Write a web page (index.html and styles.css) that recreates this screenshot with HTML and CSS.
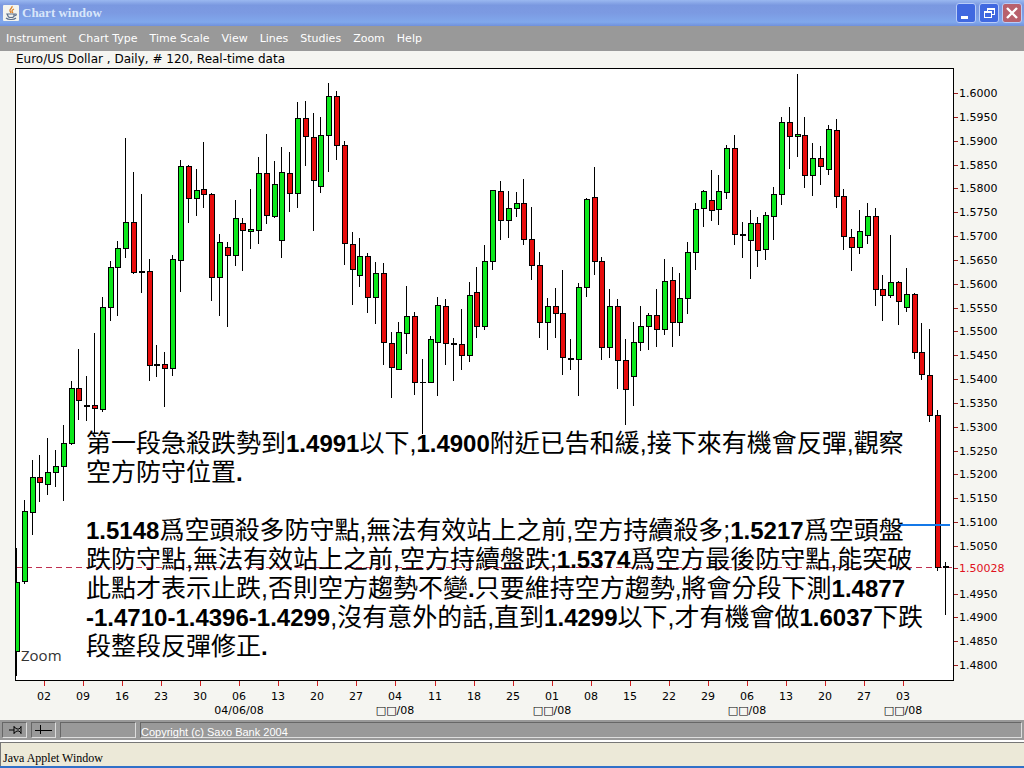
FILE: index.html
```
<!DOCTYPE html>
<html lang="zh-Hant">
<head>
    <meta charset="UTF-8">
    <meta name="viewport" content="width=device-width, initial-scale=1.0">
    <title>Chart window</title>
    <link rel="stylesheet" href="styles.css">
</head>
<body>
    <header class="titlebar">
        <svg class="java-icon" width="16" height="16" viewBox="0 0 16 16">
            <rect width="16" height="16" rx="1" fill="#f4f4ee"/>
            <path d="M9 1c1 2-3 3-2 5l1 2M11 4c-2 1-3 2-1 4" fill="none" stroke="#d9822b" stroke-width="1.3"/>
            <path d="M4 9h7v2c0 2-6 2-6 0zM11 9h2c1 1-1 2-2 2M3 13c2 2 8 2 10 0" fill="none" stroke="#5b6f8c" stroke-width="1.2"/>
        </svg>
        <h1>Chart window</h1>
        <div class="window-buttons">
            <button type="button" aria-label="Minimize">
                <svg width="18" height="18"><rect x="4" y="12" width="7" height="3" fill="#fff"/></svg>
            </button>
            <button type="button" aria-label="Restore">
                <svg width="18" height="18" fill="#fff" shape-rendering="crispEdges">
                    <path d="M7 4h8v2H7zM7 6h1v1H7zM14 6h1v5h-1zM12 10h2v1h-2z"/>
                    <path d="M4 7h8v2H4zM4 9h1v5H4zM11 9h1v5h-1zM4 13h8v1H4z"/>
                </svg>
            </button>
            <button type="button" class="close" aria-label="Close">
                <svg width="18" height="18"><path d="M4 4l10 10M14 4L4 14" stroke="#fff" stroke-width="2.4"/></svg>
            </button>
        </div>
    </header>

    <nav class="menu">
        <button type="button">Instrument</button>
        <button type="button">Chart Type</button>
        <button type="button">Time Scale</button>
        <button type="button">View</button>
        <button type="button">Lines</button>
        <button type="button">Studies</button>
        <button type="button">Zoom</button>
        <button type="button">Help</button>
    </nav>

    <main class="chart">
        <svg id="chart" viewBox="0 51 1024 669">
            <text class="chart-title" x="16" y="63">Euro/US Dollar , Daily, # 120, Real-time data</text>
            <rect x="15" y="68" width="939" height="613" fill="#000"/>
            <rect x="16" y="69" width="937" height="611" fill="#fff"/>
            <g id="last-price"></g>
            <g id="candles"></g>
            <g id="axis"></g>
            <rect x="898" y="524" width="52" height="2" fill="#1478e8"/>
            <text class="zoom-label" x="21" y="661">Zoom</text>
        </svg>
        <div class="note">
            <p>第一段急殺跌勢到<b>1.4991</b>以下,<b>1.4900</b>附近已告和緩,接下來有機會反彈,觀察<br>空方防守位置<b>.</b></p>
            <p><b>1.5148</b>爲空頭殺多防守點,無法有效站上之前,空方持續殺多;<b>1.5217</b>爲空頭盤<br>跌防守點,無法有效站上之前,空方持續盤跌;<b>1.5374</b>爲空方最後防守點,能突破<br>此點才表示止跌,否則空方趨勢不變<b>.</b>只要維持空方趨勢,將會分段下測<b>1.4877</b><br><b>-1.4710-1.4396-1.4299</b>,沒有意外的話,直到<b>1.4299</b>以下,才有機會做<b>1.6037</b>下跌<br>段整段反彈修正<b>.</b></p>
        </div>
    </main>

    <div class="toolbar">
        <button type="button" aria-label="Pin">
            <svg width="22" height="14" fill="none" stroke="#000"><path d="M6 7h5M11 3v8M11 4l3 2h2l2-2M11 10l3-2h2l2 2M18 3v8"/></svg>
        </button>
        <button type="button" aria-label="Crosshair">
            <svg width="22" height="14" fill="none" stroke="#000" shape-rendering="crispEdges"><path d="M3 7h17M8 2v9"/></svg>
        </button>
        <div class="field"></div>
        <div class="field copyright">Copyright (c) Saxo Bank 2004</div>
    </div>

    <footer class="applet">Java Applet Window</footer>

    <script src="chart.js"></script>
</body>
</html>
```
FILE: styles.css
```
body {
    margin: 0;
    background-color: #f5f5f1;
    font-family: "DejaVu Sans", sans-serif;
    font-size: 11px;
}

button {
    border: none;
    padding: 0;
    font: inherit;
}

svg {
    display: block;
}

.titlebar {
    display: flex;
    align-items: center;
    height: 26px;
    padding: 0 2px 0 3px;
    gap: 3px;
    box-sizing: border-box;
    background: linear-gradient(#9ab8f0, #7a98e0 20%, #7c9ae2 50%, #80a8ec 85%, #7090dc);
}

.titlebar h1 {
    flex: 1;
    margin: 0;
    font: bold 13px "Liberation Serif", serif;
    color: #d8e6fa;
}

.window-buttons {
    display: flex;
    gap: 3px;
}

.window-buttons button {
    width: 20px;
    height: 20px;
    border: 1px solid #b8ccf8;
    border-radius: 3px;
    background-color: #4068e0;
}

.window-buttons .close {
    background-color: #b8606c;
}

.menu {
    display: flex;
    align-items: center;
    gap: 12px;
    height: 25px;
    padding: 0 6px;
    background-color: #999;
}

.menu button {
    background: none;
    color: #fff;
}

.chart {
    position: relative;
}

#chart {
    width: 100%;
    height: auto;
    shape-rendering: crispEdges;
}

.chart-title {
    font-size: 12px;
}

.axis-date {
    text-anchor: middle;
}

.zoom-label {
    font: 15px "Open Sans", sans-serif;
    fill: #333;
}

/* commentary lies over the candles */
.note {
    position: absolute;
    left: 86px;
    top: 378px;
    font: 25px/29px "Liberation Sans", "Noto Sans CJK TC", sans-serif;
    white-space: nowrap;
    color: #000;
}

.note p {
    margin: 0 0 29px;
}

.note b {
    font-size: 24px;
}

.toolbar {
    display: flex;
    gap: 4px;
    height: 20px;
    padding: 2px;
    box-sizing: border-box;
    background-color: #999;
}

.toolbar button {
    width: 25px;
    height: 16px;
    border: 1px solid;
    border-color: #666 #ddd #ddd #666;
    background-color: #999;
}

.field {
    width: 74px;
    border: 1px solid;
    border-color: #666 #ddd #ddd #666;
}

.copyright {
    flex: 1;
    color: #fff;
    font: 11px/18px "Liberation Sans", sans-serif;
}

.applet {
    height: 28px;
    box-sizing: border-box;
    padding-left: 3px;
    border-top: 2px solid #fff;
    border-bottom: 2px solid #3070c8;
    box-shadow: inset 1px 1px #777;
    background-color: #ece9d8;
    font: 12px/32px "Liberation Serif", serif;
}
```
FILE: chart.js
```
// high, body top, body bottom, low, direction
const candles = [
    [548, 582, 652, 676, "up"], [500, 511, 582, 584, "up"], [460, 477, 513, 535, "up"], [455, 477, 483, 502, "down"],
    [438, 472, 485, 495, "up"], [450, 466, 473, 487, "up"], [425, 443, 467, 501, "up"], [381, 388, 444, 445, "up"],
    [349, 388, 401, 420, "down"], [376, 405, 407, 421, "down"], [333, 405, 409, 434, "down"], [297, 307, 410, 412, "up"],
    [261, 267, 308, 321, "up"], [241, 248, 268, 316, "up"], [138, 222, 249, 258, "up"], [172, 222, 273, 274, "down"],
    [194, 271, 273, 293, "down"], [259, 271, 366, 381, "down"], [345, 364, 366, 377, "down"], [352, 364, 369, 407, "down"],
    [255, 259, 369, 376, "up"], [160, 166, 261, 292, "up"], [165, 166, 199, 223, "down"], [169, 190, 199, 216, "up"],
    [142, 189, 195, 208, "down"], [193, 194, 278, 301, "down"], [234, 242, 278, 316, "up"], [242, 247, 256, 327, "down"],
    [200, 218, 256, 266, "up"], [218, 223, 231, 271, "down"], [189, 229, 232, 249, "up"], [157, 173, 231, 244, "up"],
    [134, 173, 216, 224, "down"], [161, 184, 217, 218, "up"], [147, 172, 241, 258, "up"], [152, 173, 194, 212, "down"],
    [102, 118, 194, 208, "up"], [101, 118, 137, 166, "down"], [113, 137, 181, 231, "down"], [117, 135, 187, 193, "up"],
    [83, 96, 136, 172, "up"], [91, 96, 146, 160, "down"], [141, 145, 244, 265, "down"], [232, 244, 270, 305, "down"],
    [238, 256, 276, 287, "up"], [253, 256, 298, 313, "down"], [262, 273, 298, 324, "up"], [263, 273, 343, 365, "down"],
    [332, 343, 368, 398, "down"], [322, 332, 370, 370, "up"], [286, 316, 334, 354, "up"], [312, 316, 383, 395, "down"],
    [359, 382, 383, 434, "down"], [336, 339, 383, 383, "up"], [297, 305, 343, 396, "up"], [299, 306, 344, 365, "down"],
    [338, 343, 345, 381, "down"], [309, 344, 356, 370, "down"], [282, 295, 356, 362, "up"], [267, 292, 327, 338, "down"],
    [245, 261, 327, 330, "up"], [190, 190, 262, 270, "up"], [181, 191, 221, 240, "down"], [191, 208, 221, 238, "up"],
    [192, 203, 209, 217, "up"], [179, 203, 240, 245, "down"], [207, 239, 266, 280, "down"], [252, 265, 323, 338, "down"],
    [298, 306, 323, 350, "up"], [288, 306, 314, 338, "down"], [270, 313, 358, 375, "down"], [339, 358, 360, 370, "down"],
    [283, 287, 360, 396, "up"], [198, 199, 288, 297, "up"], [167, 197, 262, 275, "down"], [257, 261, 348, 360, "down"],
    [289, 306, 348, 358, "up"], [299, 306, 361, 389, "down"], [339, 360, 390, 425, "down"], [322, 342, 377, 406, "up"],
    [306, 326, 343, 351, "up"], [313, 315, 327, 350, "up"], [289, 315, 330, 347, "down"], [259, 281, 330, 335, "up"],
    [267, 280, 323, 347, "down"], [273, 298, 323, 336, "up"], [242, 252, 299, 314, "up"], [203, 209, 253, 270, "up"],
    [190, 191, 209, 227, "up"], [170, 200, 211, 221, "down"], [175, 191, 210, 225, "up"], [145, 148, 193, 199, "up"],
    [135, 148, 235, 245, "down"], [222, 234, 236, 258, "down"], [210, 223, 241, 279, "up"], [217, 223, 251, 267, "down"],
    [212, 215, 250, 260, "up"], [187, 194, 217, 240, "up"], [117, 122, 195, 205, "up"], [107, 122, 137, 169, "down"],
    [74, 134, 137, 157, "up"], [117, 135, 176, 188, "down"], [143, 158, 176, 196, "up"], [146, 158, 167, 185, "down"],
    [125, 129, 170, 175, "up"], [119, 130, 197, 208, "down"], [189, 196, 237, 250, "down"], [229, 237, 248, 271, "down"],
    [210, 231, 248, 254, "up"], [203, 216, 236, 244, "up"], [208, 216, 290, 306, "down"], [275, 289, 296, 321, "down"],
    [235, 282, 296, 298, "up"], [281, 282, 302, 325, "down"], [268, 294, 308, 312, "up"], [293, 294, 353, 359, "down"],
    [323, 352, 375, 380, "down"], [329, 375, 416, 422, "down"], [410, 415, 568, 571, "down"], [562, 566, 568, 615, "down"]
];
const days = ["02", "09", "16", "23", "30", "06", "13", "20", "27", "04", "11", "18", "25",
    "01", "08", "15", "22", "29", "06", "13", "20", "27", "03"];
const months = { 5: "04/06/08", 9: "□□/08", 13: "□□/08", 18: "□□/08", 22: "□□/08" };
const colors = { up: "#0ce81c", down: "#e80c0c" };

function rect(x, y, w, h, fill) {
    return `<rect x="${x}" y="${y}" width="${w}" height="${h}" fill="${fill}"/>`;
}

function drawCandles() {
    let out = "";
    candles.forEach(([high, top, bottom, low, dir], i) => {
        const x = Math.floor(16.5 + 7.805 * i);
        const left = Math.max(x - 2, 15);
        const right = x + 4;
        out += rect(x, high, 1, low - high, "#000");
        out += rect(left, top, right - left, bottom - top, "#000");
        if (bottom - top > 2) {
            out += rect(left + 1, top + 1, right - left - 2, bottom - top - 2, colors[dir]);
        }
    });
    document.getElementById("candles").innerHTML = out;
}

function drawLastPrice() {
    let out = "";
    for (let x = 16; x < 950; x += 10) {
        out += rect(x, 567, 6, 1, "#c03050");
    }
    document.getElementById("last-price").innerHTML = out;
}

function drawAxis() {
    let out = "";
    for (let i = 0; i <= 24; i++) {
        const y = Math.round(93 + i * 143 / 6);
        if (i === 20) {
            // last price takes the place of 1.5000
            out += rect(954, 568, 4, 1, "#c02030") + `<text x="959" y="572" fill="#e01020">1.50028</text>`;
            continue;
        }
        out += rect(954, y, 4, 1, "#a02020") + `<text x="959" y="${y + 4}">${(1.6 - i * 0.005).toFixed(4)}</text>`;
    }
    days.forEach((day, i) => {
        const x = Math.round(44 + i * 39.05);
        out += rect(x, 681, 1, 5, "#d02020") + `<text class="axis-date" x="${x}" y="700">${day}</text>`;
        if (months[i]) {
            out += `<text class="axis-date" x="${x}" y="714">${months[i]}</text>`;
        }
    });
    document.getElementById("axis").innerHTML = out;
}

drawLastPrice();
drawCandles();
drawAxis();
```
